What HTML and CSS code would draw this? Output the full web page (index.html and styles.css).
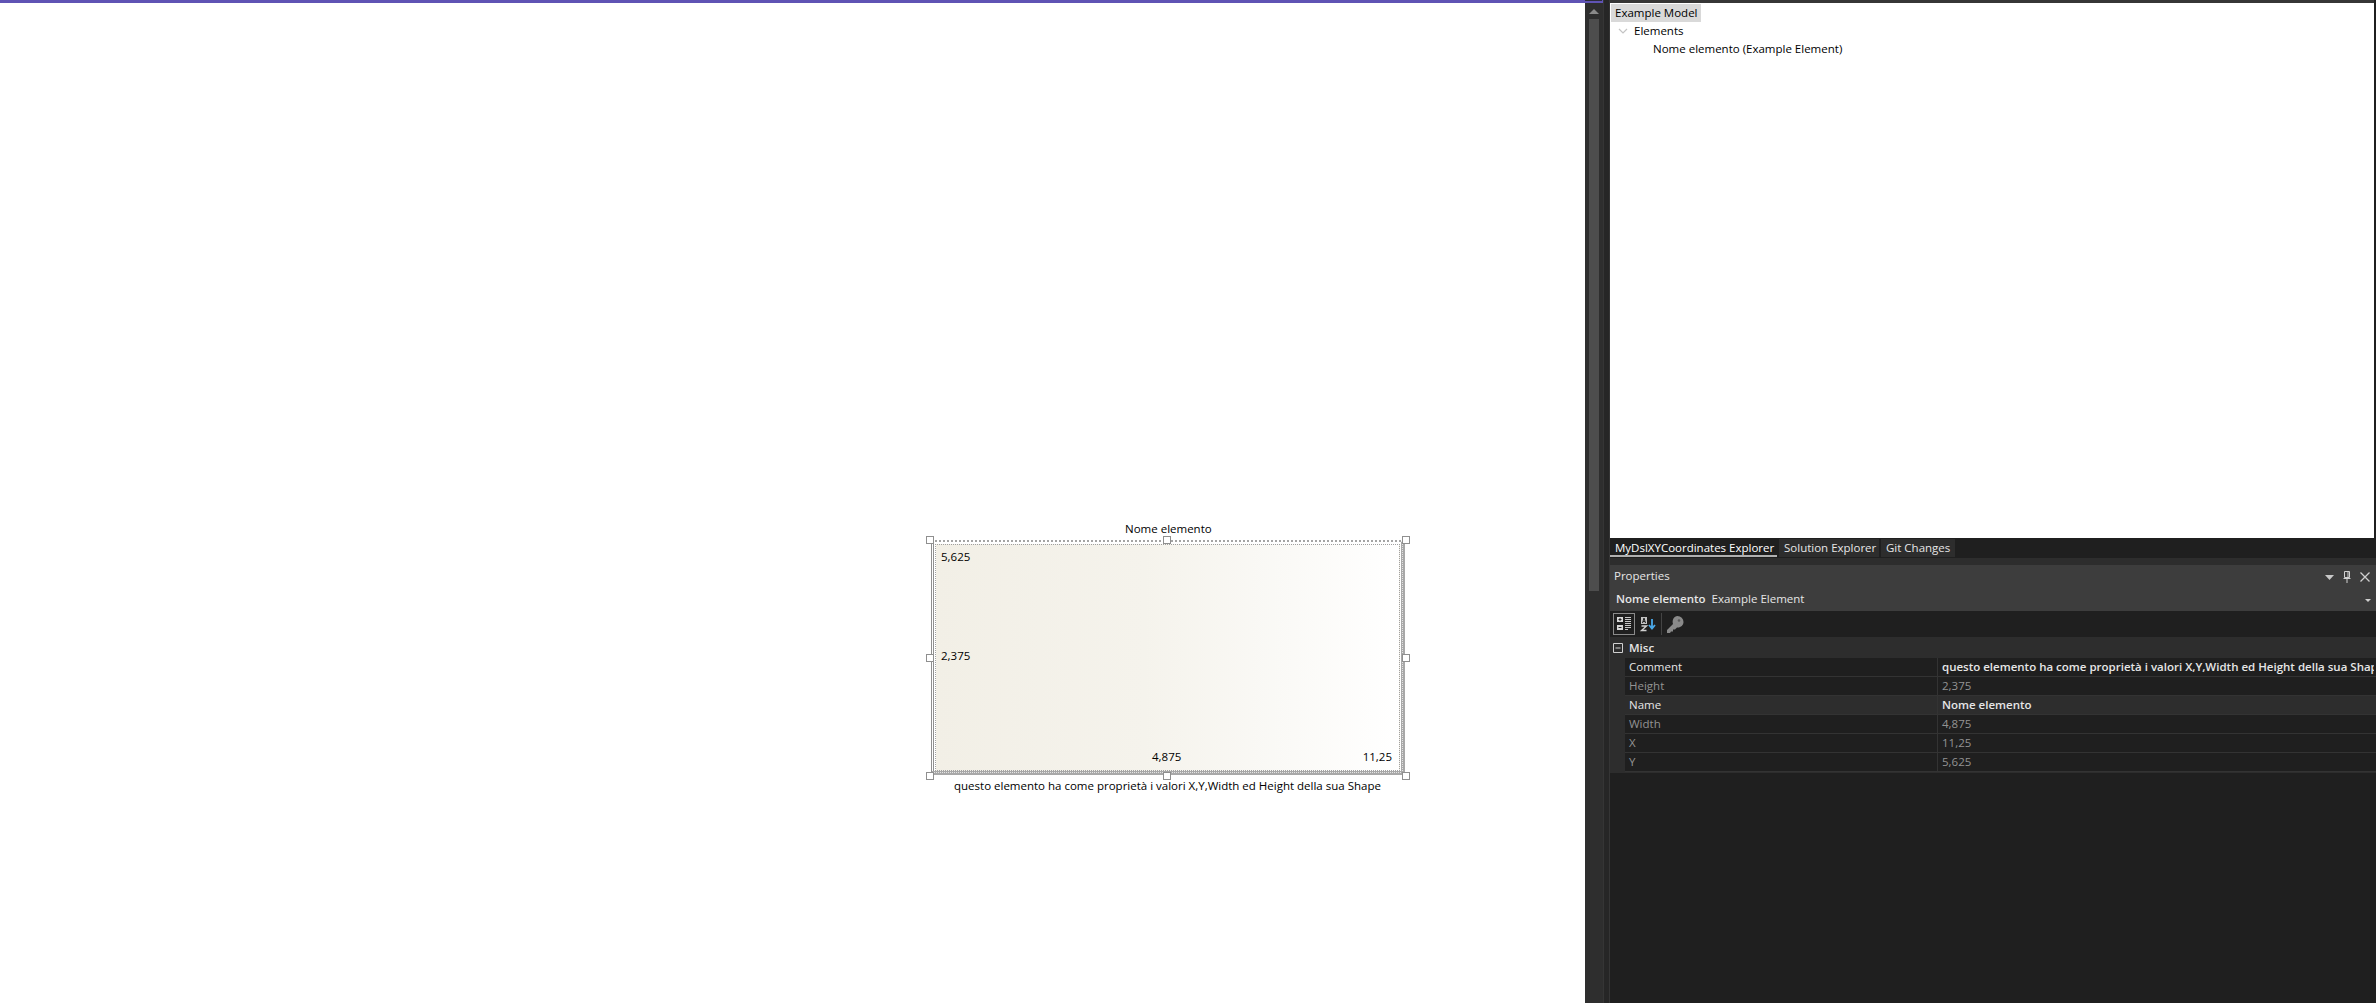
FILE: index.html
```html
<!DOCTYPE html>
<html>
<head>
<meta charset="utf-8">
<title>MyDslXYCoordinates</title>
<link rel="stylesheet" href="styles.css">
</head>
<body>
<div class="app">
	<div class="canvas">
		<div class="lbl lbl-name">Nome elemento</div>
		<div class="shape">
			<div class="shape-inner">
				<span class="val val-y">5,625</span>
				<span class="val val-h">2,375</span>
				<span class="val val-w">4,875</span>
				<span class="val val-x">11,25</span>
			</div>
		</div>
		<i class="handle h-tl"></i><i class="handle h-tc"></i><i class="handle h-tr"></i>
		<i class="handle h-ml"></i><i class="handle h-mr"></i>
		<i class="handle h-bl"></i><i class="handle h-bc"></i><i class="handle h-br"></i>
		<div class="lbl lbl-comment">questo elemento ha come proprietà i valori X,Y,Width ed Height della sua Shape</div>
	</div>
	<div class="vscroll"><div class="arrow"></div><div class="thumb"></div></div>
	<div class="splitter"></div>
	<div class="side">
		<div class="explorer">
			<div class="tree-row"><span class="tree-sel">Example Model</span></div>
			<div class="tree-row indent1">
				<svg class="chev" width="10" height="6" viewBox="0 0 10 6"><path d="M1 1l4 4 4-4" fill="none" stroke="#c4c4c4" stroke-width="1.2"/></svg>
				<span>Elements</span>
			</div>
			<div class="tree-row indent2"><span>Nome elemento (Example Element)</span></div>
		</div>
		<div class="tabs">
			<div class="tab tab-on">MyDslXYCoordinates Explorer</div>
			<div class="tab tab-sol">Solution Explorer</div>
			<div class="tab tab-git">Git Changes</div>
		</div>
		<div class="tabs-gap"></div>
		<div class="props">
			<div class="props-title">
				<span>Properties</span>
				<span class="title-btns">
					<svg width="9" height="5" viewBox="0 0 9 5"><path d="M0 0h9L4.500 5z" fill="#c8c8c8"/></svg>
					<svg width="8" height="12" viewBox="0 0 8 12"><path d="M1.500.5h5v6h-5zM.5 7.500h7M4 8v4M5 1v5" fill="none" stroke="#d0d0d0"/></svg>
					<svg width="10" height="10" viewBox="0 0 10 10"><path d="M.5.5l9 9M9.500.5l-9 9" fill="none" stroke="#d0d0d0" stroke-width="1.300"/></svg>
				</span>
			</div>
			<div class="props-object">
				<b>Nome elemento</b><span>Example Element</span>
				<svg class="obj-drop" width="6" height="3" viewBox="0 0 6 3"><path d="M0 0h6L3 3z" fill="#d0d0d0"/></svg>
			</div>
			<div class="props-tools">
				<span class="tool tool-on">
					<svg width="16" height="16" viewBox="0 0 16 16">
						<path d="M1 1h6v5H1zM1 9h6v5H1z" fill="#d8d8d8"/>
						<path d="M4 2v3M2.500 3.500h3M2.500 11.500h3" stroke="#222" fill="none"/>
						<path d="M9 1.500h6M9 3.500h6M9 5.500h6M9 7.500h6M9 9.500h6M9 11.500h6M9 13.500h3" stroke="#c8c8c8" fill="none"/>
					</svg>
				</span>
				<span class="tool">
					<svg width="16" height="16" viewBox="0 0 16 16">
						<path d="M1 1h6v7H1z" fill="#c4c4c4"/>
						<path d="M2.500 7l1.500-5 1.500 5M3 5.500h2" stroke="#222" fill="none"/>
						<path d="M1.500 10h5l-5 4.500h5" stroke="#d0d0d0" stroke-width="1.400" fill="none"/>
						<path d="M12 3v9M9 9l3 3.500L15 9" stroke="#4aa8e8" stroke-width="1.800" fill="none"/>
					</svg>
				</span>
				<span class="tool-sep"></span>
				<span class="tool">
					<svg width="17" height="17" viewBox="0 0 17 17"><path d="M10.500 0a6 6 0 0 1 6 6c0 3.300-3 6-6.500 5.500L8 13.500H6V15.500H4l-1 1.500H0v-3l6-6C4.800 4 7 0 10.500 0z" fill="#8a8a8a"/><circle cx="12" cy="4.500" r="1.300" fill="#5a5a5a"/></svg>
				</span>
			</div>
			<div class="grid">
				<div class="cat">
					<svg width="10" height="10" viewBox="0 0 10 10"><path d="M.5.500h9v9h-9zM2.500 5h5" fill="none" stroke="#d0d0d0"/></svg>
					<b>Misc</b>
				</div>
				<div class="row"><span class="k">Comment</span><b class="v">questo elemento ha come proprietà i valori X,Y,Width ed Height della sua Shape</b></div>
				<div class="row dim"><span class="k">Height</span><span class="v">2,375</span></div>
				<div class="row row-sel"><span class="k">Name</span><b class="v">Nome elemento</b></div>
				<div class="row dim"><span class="k">Width</span><span class="v">4,875</span></div>
				<div class="row dim"><span class="k">X</span><span class="v">11,25</span></div>
				<div class="row dim"><span class="k">Y</span><span class="v">5,625</span></div>
			</div>
			<div class="props-rest"></div>
		</div>
	</div>
</div>
</body>
</html>
```

FILE: styles.css
```css
* {
	box-sizing: border-box;
}
html, body {
	margin: 0;
	height: 100%;
	overflow: hidden;
}
body {
	font-family: "Open Sans", "Noto Sans", sans-serif;
	font-size: 11.500px;
	background: #1f1f1f;
}
b {
	font-weight: 600;
}
.app {
	position: relative;
	display: flex;
	height: 1003px;
}
/* dark pixel row above the purple accent */
.app::before {
	content: "";
	position: absolute;
	left: 0;
	top: 0;
	width: 1602px;
	height: 1px;
	background: #2b2b3a;
}

/* diagram surface */
.canvas {
	position: relative;
	width: 1585px;
	background: #fff;
	border-top: 3px solid #5f53b4;
	color: #000;
}
.lbl {
	position: absolute;
	white-space: nowrap;
	line-height: 16px;
}
.lbl-name {
	left: 1125px;
	top: 518px;
}
.lbl-comment {
	left: 954px;
	top: 775px;
}
.shape {
	position: absolute;
	left: 931px;
	top: 537px;
	width: 474px;
	height: 235px;
	border-top: 2px dotted #a4a4a4;
	border-left: 1px solid #8f8f8f;
	border-right: 4px solid #a8a8a8;
	border-bottom: 4px solid #a8a8a8;
	padding: 2px 1px 0 3px;
}
/* second line of the selection frame on the left */
.shape::before {
	content: "";
	position: absolute;
	left: 1px;
	top: 1px;
	width: 1px;
	bottom: 0;
	background: #8f8f8f;
}
/* hatch running through the thick right and bottom edges */
.shape::after {
	content: "";
	position: absolute;
	left: 0;
	top: 0;
	right: -2px;
	bottom: -2px;
	border-right: 1px dotted #e4e4e4;
	border-bottom: 1px dotted #e4e4e4;
}
.shape-inner {
	position: relative;
	height: 100%;
	border: 1px dotted #a0a0a0;
	background: linear-gradient(to right, #f2efe6, #f5f3ec 45%, #fff);
}
.val {
	position: absolute;
	line-height: 16px;
}
.val-y {
	left: 5px;
	top: 4px;
}
.val-h {
	left: 5px;
	top: 103px;
}
.val-w {
	left: 216px;
	bottom: 5px;
}
.val-x {
	right: 7px;
	bottom: 5px;
}
.handle {
	position: absolute;
	width: 8px;
	height: 8px;
	background: #fff;
	border: 1px solid #8f8f8f;
}
.h-tl { left: 926px; top: 533px; }
.h-tc { left: 1163px; top: 533px; }
.h-tr { left: 1402px; top: 533px; }
.h-ml { left: 926px; top: 651px; }
.h-mr { left: 1402px; top: 651px; }
.h-bl { left: 926px; top: 769px; }
.h-bc { left: 1163px; top: 769px; }
.h-br { left: 1402px; top: 769px; }

/* scrollbar + splitter */
.vscroll {
	width: 18px;
	background: #2e2e2e;
	border-top: 3px solid #5f53b4;
	padding-top: 6px;
}
.arrow {
	width: 0;
	margin: 0 auto 5px;
	border: 5px solid transparent;
	border-top: 0;
	border-bottom: 5px solid #8a8a8a;
}
.thumb {
	width: 10px;
	height: 572px;
	margin: 0 auto;
	background: #4d4d4d;
}
.splitter {
	width: 7px;
	background: #262626;
	border-left: 1px solid #353535;
	border-right: 1px solid #353535;
}

/* right hand tool windows */
.side {
	flex: 1;
	display: flex;
	flex-direction: column;
	min-width: 0;
}
.explorer {
	height: 538px;
	margin-right: 2px;
	padding: 1px 0 0 1px;
	background: #fff;
	border-top: 3px solid #363636;
	color: #000;
}
.tree-row {
	height: 18px;
	line-height: 18px;
	white-space: nowrap;
	display: flex;
	align-items: center;
}
.tree-sel {
	background: #d9d9d9;
	padding: 0 4px;
	width: 90px;
}
.indent1 {
	padding-left: 7px;
}
.chev {
	margin-right: 6px;
}
.indent2 {
	padding-left: 42px;
}
.tabs {
	display: flex;
	gap: 2px;
	height: 20px;
	background: #1f1f1f;
	padding-top: 1px;
	color: #e6e6e6;
}
.tab {
	height: 18px;
	line-height: 17px;
	padding: 0 5px;
	background: #2d2d2d;
	white-space: nowrap;
}
.tab-on {
	width: 167px;
	background: #1f1f1f;
	border-bottom: 2px solid #b0b0b0;
	color: #fff;
}
.tab-sol {
	width: 100px;
}
.tab-git {
	width: 74px;
}
.tabs-gap {
	height: 7px;
	background: #2d2d2d;
}
.props {
	flex: 1;
	display: flex;
	flex-direction: column;
	color: #e6e6e6;
}
.props-title {
	height: 24px;
	line-height: 22px;
	padding: 0 5px 0 4px;
	background: #3d3d3d;
	display: flex;
	justify-content: space-between;
}
.title-btns {
	display: flex;
	align-items: center;
	gap: 9px;
	padding-right: 1px;
}
.props-object {
	height: 22px;
	line-height: 20px;
	padding: 0 6px;
	background: #3d3d3d;
	display: flex;
	gap: 6px;
	position: relative;
	white-space: nowrap;
}
.obj-drop {
	position: absolute;
	right: 5px;
	top: 10px;
}
.props-tools {
	height: 26px;
	background: #1f1f1f;
	display: flex;
	align-items: center;
	padding-left: 3px;
	gap: 2px;
}
.tool {
	width: 22px;
	height: 22px;
	display: flex;
	align-items: center;
	justify-content: center;
}
.tool-on {
	border: 1px solid #8a8a8a;
}
.tool-sep {
	width: 1px;
	height: 22px;
	background: #444;
}
.grid {
	background: #2d2d2d;
	padding-bottom: 1px;
}
.cat {
	height: 21px;
	display: flex;
	align-items: center;
	gap: 6px;
	padding-left: 3px;
}
.cat b {
	color: #e6e6e6;
}
.row {
	display: flex;
	height: 19px;
	margin-left: 15px;
	line-height: 17px;
	background: #1f1f1f;
	border-bottom: 1px solid #333;
	white-space: nowrap;
	overflow: hidden;
}
.row-sel {
	background: #2d2d2d;
}
.k {
	width: 313px;
	flex: none;
	padding-left: 4px;
	border-right: 1px solid #333;
}
.v {
	padding-left: 4px;
	overflow: hidden;
	flex: 1;
	margin-right: 2px;
}
.dim {
	color: #939393;
}
.props-rest {
	flex: 1;
	background: #1f1f1f;
}
```
